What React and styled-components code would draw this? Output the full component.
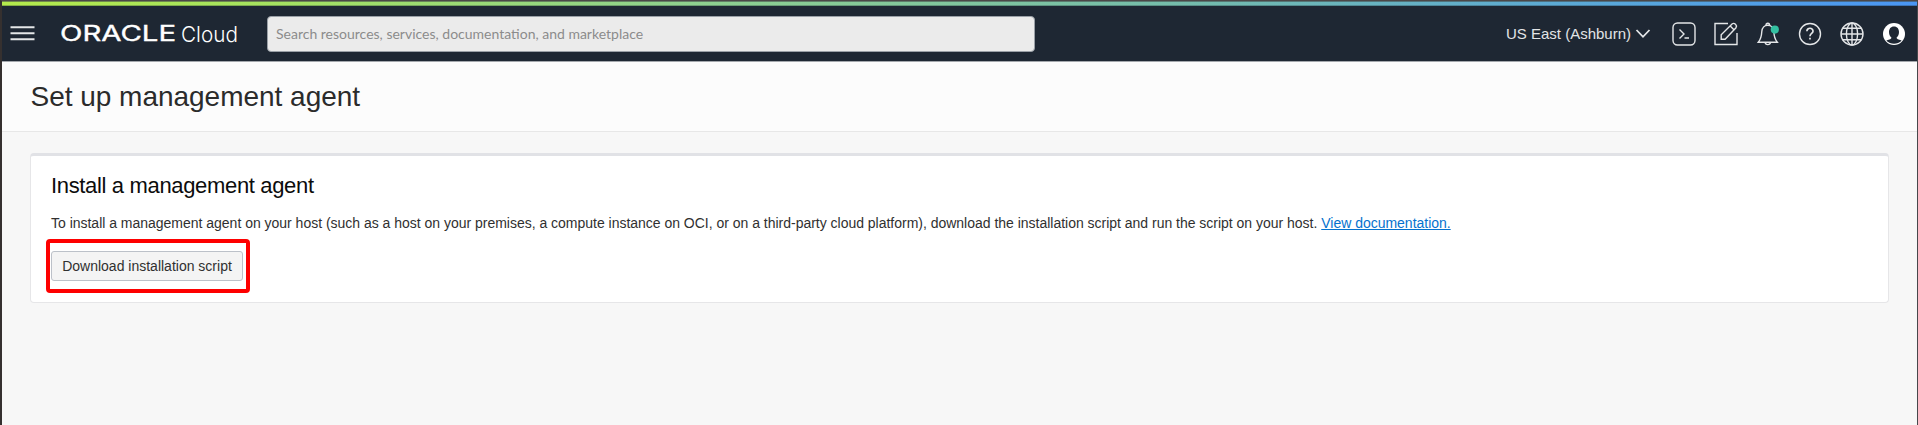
import React from "react";
import styled, { createGlobalStyle } from "styled-components";

const GlobalStyle = createGlobalStyle`
  * { box-sizing: border-box; }
  body { margin: 0; background: #f7f7f7; font-family: "Liberation Sans", Arial, sans-serif; }
`;

const Frame = styled.div`
  height: 425px;
  overflow: hidden;
  border-left: 2px solid #35302f;
  border-right: 1px solid #47484b;
  border-top: 1px solid #4b4747;
  background: #f7f7f7;
`;

const Accent = styled.div`
  height: 5px;
  border-top: 1px solid rgba(70, 75, 75, 0.6);
  border-bottom: 1px solid rgba(30, 40, 50, 0.3);
  background: linear-gradient(90deg, #b4ea4c 0%, #a6e35e 13%, #8fd18f 36%, #74bcac 62%, #5ba9d6 82%, #4a96f4 100%);
`;

const TopBar = styled.header`
  display: flex;
  align-items: center;
  height: 56px;
  padding: 0 11px 0 8px;
  background: #1e2733;
  border-bottom: 1px solid #a4a8ad;
`;

const MenuButton = styled.button`
  display: flex;
  width: 25px;
  height: 24px;
  padding: 0;
  border: 0;
  background: none;
`;

const Logo = styled.svg`
  width: 184px;
  height: 30px;
  margin-left: 24px;
  fill: #fff;
  font-family: Inter, "Liberation Sans", sans-serif;
`;

const Search = styled.input`
  width: 768px;
  height: 36px;
  margin-left: 24px;
  padding: 0 8px 1px;
  border: 1px solid #9aa0a7;
  border-radius: 4px;
  background: #ebebeb;
  font: 14px Lato, "Noto Sans", sans-serif;
  &::placeholder { color: #8b8b8b; opacity: 1; }
`;

const Region = styled.div`
  display: flex;
  align-items: center;
  gap: 5px;
  margin-left: auto;
  color: #e2e4e6;
  font-size: 15px;
  white-space: nowrap;
`;

const Tools = styled.nav`
  display: flex;
  gap: 18px;
  margin-left: 22px;
`;

const Icon = styled.svg`
  width: ${(p) => p.$w || 24}px;
  height: ${(p) => p.$h || 24}px;
  flex: none;
  overflow: visible;
  fill: none;
  stroke: #e4e6e8;
  stroke-width: ${(p) => p.$stroke || 1.4};
`;

const TitleBand = styled.div`
  display: flex;
  align-items: center;
  height: 70px;
  padding: 0 28.5px;
  background: #fcfcfc;
  border-bottom: 1px solid #e7e7e7;
`;

const Title = styled.h1`
  margin: 0;
  color: #2b2b2b;
  font-size: 28px;
  font-weight: 400;
  line-height: 34px;
  letter-spacing: -0.02px;
`;

const Card = styled.section`
  height: 150px;
  margin: 21px 28px 0;
  padding: 17px 20px 0;
  border: 1px solid #e6e6e8;
  border-top: 3px solid #e1e2e6;
  border-radius: 4px;
  background: #fff;
`;

const CardTitle = styled.h2`
  margin: 0;
  color: #0c0c0c;
  font-size: 22px;
  font-weight: 400;
  line-height: 26px;
  letter-spacing: -0.34px;
`;

const Copy = styled.p`
  margin: 15px 0 0;
  color: #303030;
  font-size: 14px;
  line-height: 18px;
  letter-spacing: -0.014px;
  white-space: nowrap;
`;

const DocLink = styled.a`
  color: #0572ce;
  text-decoration: underline;
`;

const ButtonWrap = styled.div`
  position: relative;
  width: 192px;
  margin-top: 19px;
`;

const Button = styled.button`
  display: block;
  width: 192px;
  height: 30px;
  padding: 0;
  border: 1px solid #bcc1c9;
  border-radius: 3px;
  background: #f4f4f4;
  color: #303030;
  font: 14px "Liberation Sans", Arial, sans-serif;
  white-space: nowrap;
`;

const Highlight = styled.div`
  position: absolute;
  inset: -12px -7px -12px -5px;
  border: 4px solid #fe0000;
  border-radius: 4px;
  pointer-events: none;
`;

export default function App() {
  return (
    <Frame>
      <GlobalStyle />
      <Accent />
      <TopBar>
        <MenuButton aria-label="Menu">
          <Icon $w={25} viewBox="0 0 25 24" $stroke={2}>
            <path d="M0.5 5.2H24.5M0.5 11.2H24.5M0.5 17.2H24.5" />
          </Icon>
        </MenuButton>
        <Logo viewBox="0 0 184 30" aria-label="Oracle Cloud">
          <text x="1" y="22.3" fontSize="20.8" fontWeight="400" stroke="#fff" strokeWidth="0.35" textLength="116" lengthAdjust="spacingAndGlyphs">ORACLE</text>
          <text x="122" y="22.5" fontSize="22" fontWeight="300" textLength="57" lengthAdjust="spacingAndGlyphs">Cloud</text>
        </Logo>
        <Search placeholder="Search resources, services, documentation, and marketplace" />
        <Region>
          US East (Ashburn)
          <Icon $w={14} $h={9} viewBox="0 0 14 9" $stroke={1.8}>
            <path d="M0.5 1L7 7.8L13.5 1" />
          </Icon>
        </Region>
        <Tools>
          <Icon viewBox="0 0 24 24">
            <rect x="1" y="1" width="22" height="22" rx="4.5" />
            <path d="M7.5 7.5L12 12L7.5 16.5M12.5 16H17" />
          </Icon>
          <Icon viewBox="0 0 24 24">
            <path d="M14 1.5H1V22.5H23V11" />
            <path d="M7.2 17.2V12.8L18.3 1.8C20.3 0.4 23.6 3.3 22 5.7L11.1 17.2ZM16.2 4L20.2 8" />
          </Icon>
          <Icon viewBox="0 0 24 24">
            <path d="M2.3 20.3C5 17 5.6 13.5 5.8 9.5C6 5.7 8.5 3.2 11.8 3.2C15.1 3.2 17.6 5.7 17.8 9.5C18 13.5 18.6 17 21.3 20.3ZM10 3C10 0.6 13.6 0.6 13.6 3M9.2 20.5C9.4 23.3 14.2 23.3 14.4 20.5" />
            <circle cx="18.8" cy="7.6" r="4.1" fill="#34c1a2" stroke="none" />
          </Icon>
          <Icon viewBox="0 0 24 24">
            <circle cx="12" cy="12" r="10.5" />
            <path d="M8.9 9.2C8.9 5.2 15.2 5.4 15 9.2C14.9 11.4 12 11.5 12 14.2M12 15.8V17.6" strokeWidth="1.7" />
          </Icon>
          <Icon viewBox="0 0 24 24">
            <circle cx="12" cy="12" r="11" />
            <ellipse cx="12" cy="12" rx="5.6" ry="11" />
            <path d="M12 1V23M1 12H23M2.8 6.3H21.2M2.8 17.7H21.2" />
          </Icon>
          <Icon viewBox="0 0 24 24">
            <circle cx="12" cy="12" r="11" fill="#fff" stroke="none" />
            <path d="M12 4.4C15.3 4.4 17 6.8 17 10C17 12.8 15.8 14.8 14.5 15.8C14.8 17.6 18 17.6 19.6 18.8C15.4 22.6 8.6 22.6 4.4 18.8C6 17.6 9.2 17.6 9.5 15.8C8.2 14.8 7 12.8 7 10C7 6.8 8.7 4.4 12 4.4Z" fill="#1e2733" stroke="none" />
          </Icon>
        </Tools>
      </TopBar>
      <TitleBand>
        <Title>Set up management agent</Title>
      </TitleBand>
      <Card>
        <CardTitle>Install a management agent</CardTitle>
        <Copy>
          To install a management agent on your host (such as a host on your premises, a compute instance on OCI, or on a third-party cloud platform), download the installation script and run the script on your host. <DocLink>View documentation.</DocLink>
        </Copy>
        <ButtonWrap>
          <Button>Download installation script</Button>
          <Highlight />
        </ButtonWrap>
      </Card>
    </Frame>
  );
}
